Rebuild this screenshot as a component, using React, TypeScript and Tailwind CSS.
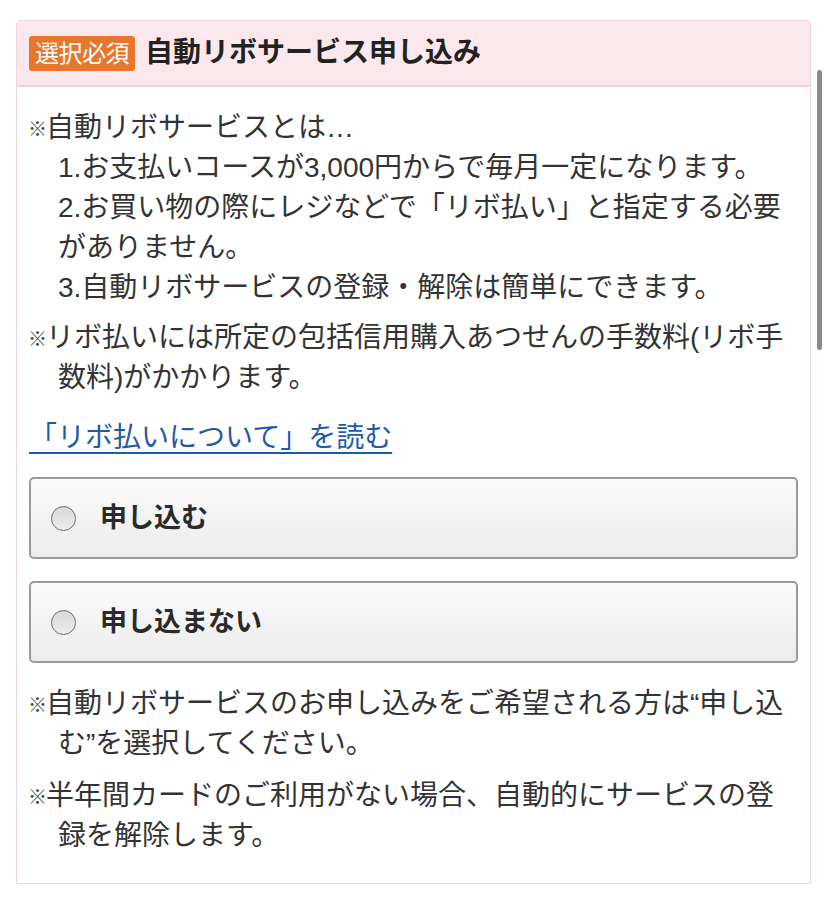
const font = { fontFamily: '"Liberation Sans", "Noto Sans CJK JP", sans-serif' }

function Note({ children, className = '' }: { children: React.ReactNode; className?: string }) {
	return (
		<p className={`pl-[29px] -indent-[29px] ${className}`}>
			<span className="inline-block w-[18px] indent-0 text-[19px] -ml-[1px] align-[1px] text-[#444]" style={{ fontFamily: '"Noto Sans CJK JP", sans-serif' }}>※</span>
			{children}
		</p>
	)
}

function Choice({ label }: { label: string }) {
	return (
		<label className="flex items-center h-[82px] rounded-[5px] border-2 border-[#9a9a9a] bg-gradient-to-b from-[#fbfbfb] to-[#ececec] px-[20px] gap-[24px]">
			<span className="w-[25px] h-[25px] rounded-full border-[1.5px] border-[#6e6e6e] bg-gradient-to-b from-[#d8d8d8] to-[#eeeeee]" />
			<span className="text-[27px] font-bold text-[#2a2a2a]">{label}</span>
		</label>
	)
}

export default function App() {
	return (
		<div className="min-h-[906px] bg-white pt-5 pl-4 pr-[17px] text-[#333]" style={font}>
			<div className="border border-[#efd6dc] rounded-t-[4px]">
				<div className="flex items-center gap-[10px] h-[66px] px-3 bg-[#fbe8ed] border-b-2 border-[#efd2d9]">
					<span className="bg-[#e8762c] text-white text-[24px] leading-[35px] px-[6px] rounded-[3px] tracking-[-0.5px]">選択必須</span>
					<h2 className="text-[28px] font-bold text-[#222]">自動リボサービス申し込み</h2>
				</div>
				<div className="px-3 pt-[21px] pb-[27px] text-[28px] leading-[40px]">
					<Note>自動リボサービスとは…</Note>
					<ol className="pl-[29px]">
						<li>1.お支払いコースが3,000円からで毎月一定になります。</li>
						<li>2.お買い物の際にレジなどで「リボ払い」と指定する必要がありません。</li>
						<li>3.自動リボサービスの登録・解除は簡単にできます。</li>
					</ol>
					<Note className="mt-[10px]">リボ払いには所定の包括信用購入あつせんの手数料(リボ手数料)がかかります。</Note>
					<a href="#" className="inline-block mt-5 text-[#1f5aa6] underline underline-offset-[5px] decoration-[1.5px]">「リボ払いについて」を読む</a>
					<div className="flex flex-col gap-[22px] mt-[19px] mb-[21px]">
						<Choice label="申し込む" />
						<Choice label="申し込まない" />
					</div>
					<Note>自動リボサービスのお申し込みをご希望される方は“申し込む”を選択してください。</Note>
					<Note className="mt-[12px]">半年間カードのご利用がない場合、自動的にサービスの登録を解除します。</Note>
				</div>
			</div>
			<div className="fixed right-[6px] top-[70px] w-[5px] h-[280px] rounded-full bg-[#8a8a8a]" />
		</div>
	)
}
